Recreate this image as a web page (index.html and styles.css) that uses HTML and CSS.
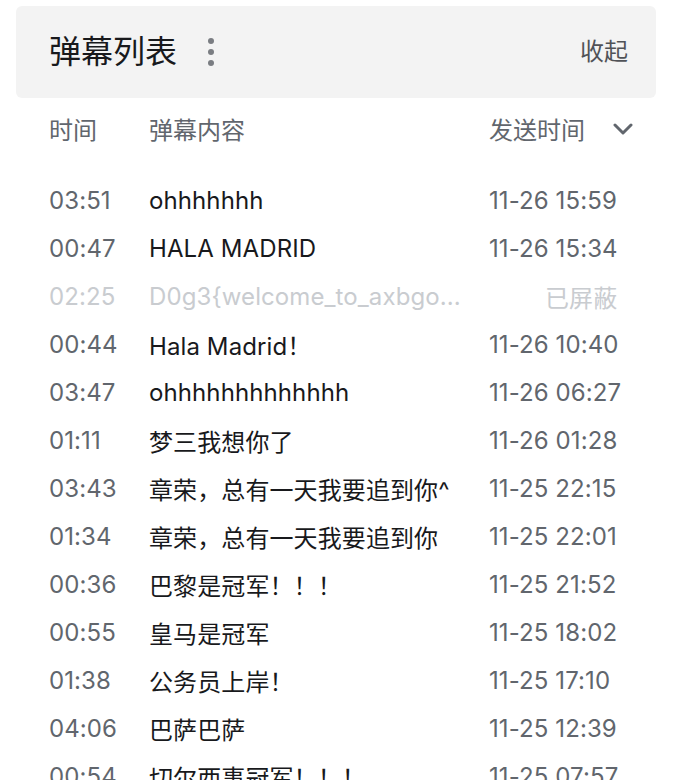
FILE: index.html
```html
<!DOCTYPE html>
<html lang="zh-CN">
<head>
<meta charset="utf-8">
<title>弹幕列表</title>
<link rel="stylesheet" href="styles.css">
</head>
<body>
<div class="panel">
  <div class="header">
    <div class="title">弹幕列表</div>
    <div class="more"><span></span><span></span><span></span></div>
    <div class="spacer"></div>
    <div class="collapse">收起</div>
  </div>
  <div class="colhead">
    <div class="c-time">时间</div>
    <div class="c-content">弹幕内容</div>
    <div class="c-send">发送时间</div>
    <svg class="chev" width="20" height="14" viewBox="0 0 20 14"><path d="M2 3 L10 11 L18 3" fill="none" stroke="#61666d" stroke-width="3" stroke-linecap="round" stroke-linejoin="round"/></svg>
  </div>
  <div class="list">
    <div class="rows">
      <div class="row"><div class="c-time">03:51</div><div class="c-content">ohhhhhhh</div><div class="c-send">11-26 15:59</div></div>
      <div class="row"><div class="c-time">00:47</div><div class="c-content">HALA MADRID</div><div class="c-send">11-26 15:34</div></div>
      <div class="row blocked"><div class="c-time">02:25</div><div class="c-content">D0g3{welcome_to_axbgo...</div><div class="c-send">已屏蔽</div></div>
      <div class="row"><div class="c-time">00:44</div><div class="c-content">Hala Madrid！</div><div class="c-send">11-26 10:40</div></div>
      <div class="row"><div class="c-time">03:47</div><div class="c-content">ohhhhhhhhhhhhh</div><div class="c-send">11-26 06:27</div></div>
      <div class="row"><div class="c-time">01:11</div><div class="c-content">梦三我想你了</div><div class="c-send">11-26 01:28</div></div>
      <div class="row"><div class="c-time">03:43</div><div class="c-content">章荣，总有一天我要追到你^</div><div class="c-send">11-25 22:15</div></div>
      <div class="row"><div class="c-time">01:34</div><div class="c-content">章荣，总有一天我要追到你</div><div class="c-send">11-25 22:01</div></div>
      <div class="row"><div class="c-time">00:36</div><div class="c-content">巴黎是冠军！！！</div><div class="c-send">11-25 21:52</div></div>
      <div class="row"><div class="c-time">00:55</div><div class="c-content">皇马是冠军</div><div class="c-send">11-25 18:02</div></div>
      <div class="row"><div class="c-time">01:38</div><div class="c-content">公务员上岸！</div><div class="c-send">11-25 17:10</div></div>
      <div class="row"><div class="c-time">04:06</div><div class="c-content">巴萨巴萨</div><div class="c-send">11-25 12:39</div></div>
      <div class="row"><div class="c-time">00:54</div><div class="c-content">切尔西事冠军！！！</div><div class="c-send">11-25 07:57</div></div>
    </div>
  </div>
</div>
</body>
</html>
```
FILE: styles.css
```css
* { box-sizing: border-box; }
html, body {
  margin: 0;
  padding: 0;
  background: #ffffff;
  height: 780px;
  overflow: hidden;
}
body {
  font-family: Inter, "Noto Sans CJK SC", sans-serif;
  color: #18191c;
}
.panel {
  padding: 6px 26px 0 16px;
}
.header {
  height: 92px;
  background: #f3f3f3;
  border-radius: 6px;
  display: flex;
  align-items: center;
  padding: 0 28px 0 33px;
}
.title {
  font-size: 32px;
  line-height: 40px;
  color: #18191c;
}
.more {
  display: flex;
  flex-direction: column;
  gap: 5px;
  margin-left: 31px;
}
.more span {
  width: 6px;
  height: 6px;
  border-radius: 50%;
  background: #7a7d82;
}
.spacer { flex: 1; }
.collapse {
  font-size: 24px;
  line-height: 32px;
  color: #505257;
}
.colhead {
  margin-top: 6px;
  height: 48px;
  display: flex;
  align-items: center;
  padding-left: 33px;
  font-size: 24px;
  color: #61666d;
}
.c-time { width: 100px; flex: none; }
.c-content { width: 340px; flex: none; white-space: nowrap; overflow: hidden; }
.c-send { flex: none; white-space: nowrap; }
.chev { margin-left: 28px; margin-top: 2px; }
.list {
  margin-top: 24px;
  height: 640px;
  overflow: hidden;
}
.row {
  height: 48px;
  display: flex;
  align-items: center;
  padding-left: 33px;
  font-size: 24px;
  letter-spacing: 0.1px;
}
.row .c-time, .row .c-send { color: #61666d; }
.row .c-content { color: #18191c; }
.row.blocked .c-time,
.row.blocked .c-content,
.row.blocked .c-send { color: #c9ccd0; }
.row.blocked .c-send { padding-left: 56px; }
```
